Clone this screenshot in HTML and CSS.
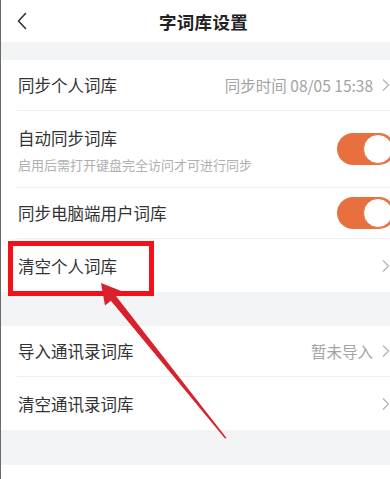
FILE: index.html
```html
<!DOCTYPE html>
<html lang="zh-CN">
<head>
    <meta charset="UTF-8">
    <meta name="viewport" content="width=device-width, initial-scale=1.0">
    <title>字词库设置</title>
    <link rel="stylesheet" href="styles.css">
</head>
<body>
    <div class="page">
        <header class="top-bar">
            <svg class="back-icon" width="10" height="18" viewBox="0 0 10 18">
                <path d="M8.5 1.5 L1.5 9 L8.5 16.5" fill="none" stroke="#333" stroke-width="1.6" stroke-linecap="round" stroke-linejoin="round"/>
            </svg>
            <h1>字词库设置</h1>
        </header>

        <div class="gap gap-top"></div>

        <section class="list">
            <div class="row">
                <span class="label">同步个人词库</span>
                <span class="value">同步时间 08/05 15:38
                    <svg class="chevron" width="8" height="14" viewBox="0 0 8 14"><path d="M1 1.5 L6.5 7 L1 12.5" fill="none" stroke="#b5b5b5" stroke-width="1.3"/></svg>
                </span>
            </div>
            <div class="row row-tall">
                <div class="label-group">
                    <span class="label">自动同步词库</span>
                    <span class="hint">启用后需打开键盘完全访问才可进行同步</span>
                </div>
                <span class="switch"><span class="knob"></span></span>
            </div>
            <div class="row">
                <span class="label">同步电脑端用户词库</span>
                <span class="switch"><span class="knob"></span></span>
            </div>
            <div class="row row-clear">
                <span class="label">清空个人词库</span>
                <span class="value">
                    <svg class="chevron" width="8" height="14" viewBox="0 0 8 14"><path d="M1 1.5 L6.5 7 L1 12.5" fill="none" stroke="#b5b5b5" stroke-width="1.3"/></svg>
                </span>
            </div>
        </section>

        <div class="gap gap-mid"></div>

        <section class="list">
            <div class="row">
                <span class="label">导入通讯录词库</span>
                <span class="value">暂未导入
                    <svg class="chevron" width="8" height="14" viewBox="0 0 8 14"><path d="M1 1.5 L6.5 7 L1 12.5" fill="none" stroke="#b5b5b5" stroke-width="1.3"/></svg>
                </span>
            </div>
            <div class="row row-clear">
                <span class="label">清空通讯录词库</span>
                <span class="value">
                    <svg class="chevron" width="8" height="14" viewBox="0 0 8 14"><path d="M1 1.5 L6.5 7 L1 12.5" fill="none" stroke="#b5b5b5" stroke-width="1.3"/></svg>
                </span>
            </div>
        </section>

        <div class="gap gap-bottom"></div>
        <div class="tail"></div>

        <!-- annotation over the screenshot -->
        <div class="mark-box"></div>
        <svg class="mark-arrow" width="390" height="479" viewBox="0 0 390 479">
            <polygon points="100,283 121.5,291.5 115.3,296.4 225.5,438 224,438.5 109.9,300.8 104,305.5" fill="#d9202c"/>
        </svg>
    </div>
</body>
</html>
```

FILE: styles.css
```css
* {
    margin: 0;
    padding: 0;
    box-sizing: border-box;
}

body {
    font-family: 'Noto Sans CJK SC', 'Noto Sans', sans-serif;
    background: #fff;
    color: #333;
}

.page {
    position: relative;
    width: 390px;
    height: 479px;
    overflow: hidden;
    border-left: 1px solid #6a6a6a;
}

.top-bar {
    height: 42px;
    display: flex;
    align-items: center;
    justify-content: center;
    position: relative;
    background: #fff;
}

.back-icon {
    position: absolute;
    left: 16px;
    top: 12px;
}

.top-bar h1 {
    font-size: 17.5px;
    font-weight: 700;
    color: #222;
    margin-left: 16px;
    letter-spacing: 0.3px;
}

.gap {
    background: #f3f4f6;
}

.gap-top {
    height: 18px;
}

.gap-mid {
    height: 34px;
}

.gap-bottom {
    height: 35px;
}

.list {
    padding-left: 16px;
    background: #fff;
}

.row {
    display: flex;
    align-items: center;
    justify-content: space-between;
    height: 51px;
    border-bottom: 1px solid #eeeff1;
    padding-left: 1px;
}

.row-tall {
    height: 77px;
}

.row-clear {
    height: 53px;
    border-bottom: none;
}

.label-group {
    display: flex;
    flex-direction: column;
    gap: 5px;
    padding-top: 2px;
}

.label {
    font-size: 16.5px;
    color: #333;
}

.hint {
    font-size: 13px;
    color: #b0b0b0;
}

.value {
    display: flex;
    align-items: center;
    gap: 9px;
    font-size: 15.5px;
    color: #a3a3a3;
    white-space: nowrap;
}

.chevron {
    flex: none;
}

.switch {
    width: 58px;
    height: 32px;
    border-radius: 16px;
    background: #e8703f;
    margin-right: -5px;
    display: flex;
    align-items: center;
    justify-content: flex-end;
    padding-right: 2px;
}

.knob {
    width: 30px;
    height: 30px;
    border-radius: 50%;
    background: #fff;
    border: 1.5px solid #e8703f;
}

.tail {
    height: 20px;
    background: #fff;
}

.mark-box {
    position: absolute;
    left: 7px;
    top: 241px;
    width: 146px;
    height: 55px;
    border: 5px solid #f31018;
}

.mark-arrow {
    position: absolute;
    left: 0;
    top: 0;
}
```
